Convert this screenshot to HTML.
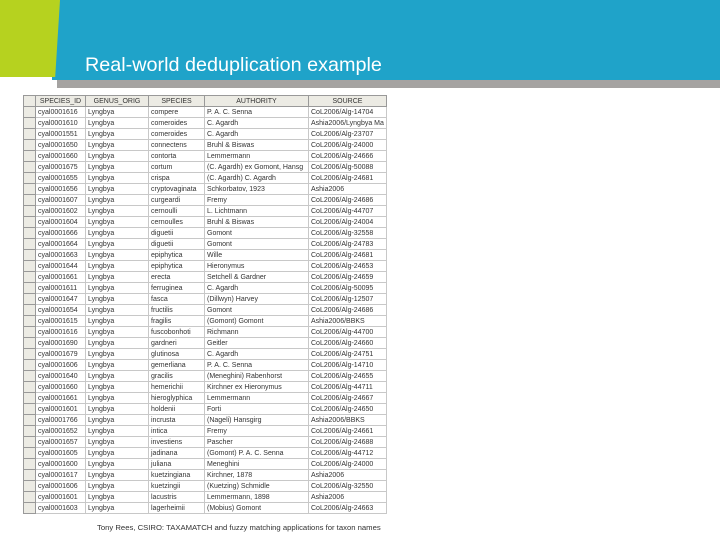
<!DOCTYPE html>
<html><head><meta charset="utf-8"><style>
body{margin:0;width:720px;height:540px;background:#fff;position:relative;overflow:hidden;font-family:"Liberation Sans",sans-serif}
.blue{position:absolute;left:52px;top:0;width:668px;height:80px;background:#1fa3c9}
.grey{position:absolute;left:57px;top:80px;width:663px;height:8px;background:#a5a3a1}
.green{position:absolute;left:0;top:0;width:60px;height:77px;background:#b6d21f;clip-path:polygon(0 0,100% 0,92% 100%,0 100%)}
.title{position:absolute;left:85px;top:54px;color:#fff;font-size:19.8px}
table{position:absolute;left:23px;top:95px;border-collapse:collapse;font-size:7px;color:#333;table-layout:fixed}
td,th{border:1px solid #c8c8c8;height:10px;padding:0 2px;white-space:nowrap;overflow:hidden;line-height:9px}
th{background:#ecebe4;font-weight:normal;border-color:#999}
td.s{background:#ecebe4;border-color:#999}
.foot{position:absolute;left:97px;top:523px;font-size:7.7px;color:#333}
</style></head><body>
<div class="blue"></div><div class="grey"></div><div class="green"></div>
<div class="title">Real-world deduplication example</div>
<table>
<colgroup><col style="width:12px"><col style="width:50px"><col style="width:63px"><col style="width:56px"><col style="width:104px"><col style="width:78px"></colgroup>
<tr><th></th><th>SPECIES_ID</th><th>GENUS_ORIG</th><th>SPECIES</th><th>AUTHORITY</th><th>SOURCE</th></tr>
<tr><td class="s"></td><td>cyal0001616</td><td>Lyngbya</td><td>compere</td><td>P. A. C. Senna</td><td>CoL2006/Alg-14704</td></tr>
<tr><td class="s"></td><td>cyal0001610</td><td>Lyngbya</td><td>comeroides</td><td>C. Agardh</td><td>Ashia2006/Lyngbya Ma</td></tr>
<tr><td class="s"></td><td>cyal0001551</td><td>Lyngbya</td><td>comeroides</td><td>C. Agardh</td><td>CoL2006/Alg-23707</td></tr>
<tr><td class="s"></td><td>cyal0001650</td><td>Lyngbya</td><td>connectens</td><td>Bruhl &amp; Biswas</td><td>CoL2006/Alg-24000</td></tr>
<tr><td class="s"></td><td>cyal0001660</td><td>Lyngbya</td><td>contorta</td><td>Lemmermann</td><td>CoL2006/Alg-24666</td></tr>
<tr><td class="s"></td><td>cyal0001675</td><td>Lyngbya</td><td>cortum</td><td>(C. Agardh) ex Gomont, Hansg</td><td>CoL2006/Alg-50088</td></tr>
<tr><td class="s"></td><td>cyal0001655</td><td>Lyngbya</td><td>crispa</td><td>(C. Agardh) C. Agardh</td><td>CoL2006/Alg-24681</td></tr>
<tr><td class="s"></td><td>cyal0001656</td><td>Lyngbya</td><td>cryptovaginata</td><td>Schkorbatov, 1923</td><td>Ashia2006</td></tr>
<tr><td class="s"></td><td>cyal0001607</td><td>Lyngbya</td><td>curgeardi</td><td>Fremy</td><td>CoL2006/Alg-24686</td></tr>
<tr><td class="s"></td><td>cyal0001602</td><td>Lyngbya</td><td>cernoulli</td><td>L. Lichtmann</td><td>CoL2006/Alg-44707</td></tr>
<tr><td class="s"></td><td>cyal0001604</td><td>Lyngbya</td><td>cernoulles</td><td>Bruhl &amp; Biswas</td><td>CoL2006/Alg-24004</td></tr>
<tr><td class="s"></td><td>cyal0001666</td><td>Lyngbya</td><td>diguetii</td><td>Gomont</td><td>CoL2006/Alg-32558</td></tr>
<tr><td class="s"></td><td>cyal0001664</td><td>Lyngbya</td><td>diguetii</td><td>Gomont</td><td>CoL2006/Alg-24783</td></tr>
<tr><td class="s"></td><td>cyal0001663</td><td>Lyngbya</td><td>epiphytica</td><td>Wille</td><td>CoL2006/Alg-24681</td></tr>
<tr><td class="s"></td><td>cyal0001644</td><td>Lyngbya</td><td>epiphytica</td><td>Hieronymus</td><td>CoL2006/Alg-24653</td></tr>
<tr><td class="s"></td><td>cyal0001661</td><td>Lyngbya</td><td>erecta</td><td>Setchell &amp; Gardner</td><td>CoL2006/Alg-24659</td></tr>
<tr><td class="s"></td><td>cyal0001611</td><td>Lyngbya</td><td>ferruginea</td><td>C. Agardh</td><td>CoL2006/Alg-50095</td></tr>
<tr><td class="s"></td><td>cyal0001647</td><td>Lyngbya</td><td>fasca</td><td>(Dillwyn) Harvey</td><td>CoL2006/Alg-12507</td></tr>
<tr><td class="s"></td><td>cyal0001654</td><td>Lyngbya</td><td>fructilis</td><td>Gomont</td><td>CoL2006/Alg-24686</td></tr>
<tr><td class="s"></td><td>cyal0001615</td><td>Lyngbya</td><td>fragilis</td><td>(Gomont) Gomont</td><td>Ashia2006/BBKS</td></tr>
<tr><td class="s"></td><td>cyal0001616</td><td>Lyngbya</td><td>fuscobonhoti</td><td>Richmann</td><td>CoL2006/Alg-44700</td></tr>
<tr><td class="s"></td><td>cyal0001690</td><td>Lyngbya</td><td>gardneri</td><td>Geitler</td><td>CoL2006/Alg-24660</td></tr>
<tr><td class="s"></td><td>cyal0001679</td><td>Lyngbya</td><td>glutinosa</td><td>C. Agardh</td><td>CoL2006/Alg-24751</td></tr>
<tr><td class="s"></td><td>cyal0001606</td><td>Lyngbya</td><td>gemerliana</td><td>P. A. C. Senna</td><td>CoL2006/Alg-14710</td></tr>
<tr><td class="s"></td><td>cyal0001640</td><td>Lyngbya</td><td>gracilis</td><td>(Meneghini) Rabenhorst</td><td>CoL2006/Alg-24655</td></tr>
<tr><td class="s"></td><td>cyal0001660</td><td>Lyngbya</td><td>hemerichii</td><td>Kirchner ex Hieronymus</td><td>CoL2006/Alg-44711</td></tr>
<tr><td class="s"></td><td>cyal0001661</td><td>Lyngbya</td><td>hieroglyphica</td><td>Lemmermann</td><td>CoL2006/Alg-24667</td></tr>
<tr><td class="s"></td><td>cyal0001601</td><td>Lyngbya</td><td>holdenii</td><td>Forti</td><td>CoL2006/Alg-24650</td></tr>
<tr><td class="s"></td><td>cyal0001766</td><td>Lyngbya</td><td>incrusta</td><td>(Nageli) Hansgirg</td><td>Ashia2006/BBKS</td></tr>
<tr><td class="s"></td><td>cyal0001652</td><td>Lyngbya</td><td>intica</td><td>Fremy</td><td>CoL2006/Alg-24661</td></tr>
<tr><td class="s"></td><td>cyal0001657</td><td>Lyngbya</td><td>investiens</td><td>Pascher</td><td>CoL2006/Alg-24688</td></tr>
<tr><td class="s"></td><td>cyal0001605</td><td>Lyngbya</td><td>jadinana</td><td>(Gomont) P. A. C. Senna</td><td>CoL2006/Alg-44712</td></tr>
<tr><td class="s"></td><td>cyal0001600</td><td>Lyngbya</td><td>juliana</td><td>Meneghini</td><td>CoL2006/Alg-24000</td></tr>
<tr><td class="s"></td><td>cyal0001617</td><td>Lyngbya</td><td>kuetzingiana</td><td>Kirchner, 1878</td><td>Ashia2006</td></tr>
<tr><td class="s"></td><td>cyal0001606</td><td>Lyngbya</td><td>kuetzingii</td><td>(Kuetzing) Schmidle</td><td>CoL2006/Alg-32550</td></tr>
<tr><td class="s"></td><td>cyal0001601</td><td>Lyngbya</td><td>lacustris</td><td>Lemmermann, 1898</td><td>Ashia2006</td></tr>
<tr><td class="s"></td><td>cyal0001603</td><td>Lyngbya</td><td>lagerheimii</td><td>(Mobius) Gomont</td><td>CoL2006/Alg-24663</td></tr>
</table>
<div class="foot">Tony Rees, CSIRO: TAXAMATCH and fuzzy matching applications for taxon names</div>
</body></html>
